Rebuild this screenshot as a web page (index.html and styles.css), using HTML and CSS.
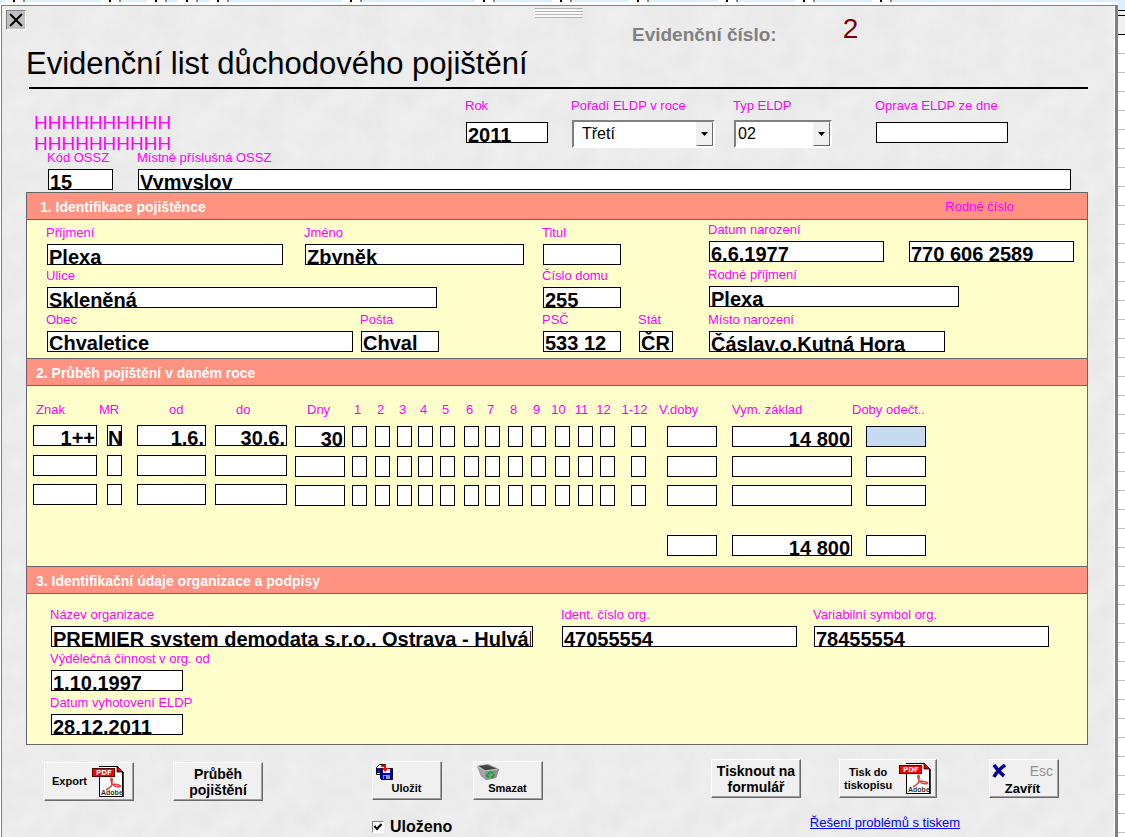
FILE: index.html
```html
<!DOCTYPE html>
<html lang="cs">
<head>
<meta charset="utf-8">
<title>Evidenční list důchodového pojištění</title>
<link rel="stylesheet" href="styles.css">
</head>
<body>
<svg class="defs" width="0" height="0" aria-hidden="true">
  <symbol id="pdf" viewBox="0 0 32 31">
    <path d="M8 1h17l6 6v23H8z" fill="#fff"/>
    <path d="M7.500 11V30.500H30.500V6" fill="none" stroke="#000"/>
    <path d="M7 .5h18" stroke="#000"/>
    <path d="M25 0l6 6h-6z" fill="#e00" stroke="#000" stroke-width=".8"/>
    <path d="M31 6v25" stroke="#000" stroke-width="1.500"/>
    <path d="M19 12c-1 2 1 5 1 7-2 3-4 4-6 5M20 18c3 0 6 0 9 2M19 12c3 1 0 4 1 6 2 2 5 4 9 2" fill="none" stroke="#e04040" stroke-width="1.400"/>
    <rect x=".5" y="2.500" width="22" height="8" fill="#f00" stroke="#500"/>
    <text x="4" y="9" font-family="DejaVu Sans" font-weight="bold" font-size="7" fill="#fff">PDF</text>
    <text x="9" y="29" font-family="Liberation Sans" font-weight="bold" font-size="7" fill="#333">Adobe</text>
  </symbol>
</svg>
<div class="screen">
  <div class="window">
    <div class="strip" aria-hidden="true"><i class="w25"></i><i class="w96"></i><i class="w46"></i><i class="w31"></i><i class="w31"></i><i class="w133"></i><i class="w133"></i><i class="w77"></i><i class="w77"></i><i class="w89"></i><i class="w77"></i><i class="w77"></i></div>
    <form class="dialog">
      <div class="grip" aria-hidden="true"></div>
      <div class="topbar">
        <button type="button" class="close" aria-label="Zavřít okno"><svg width="14" height="14" viewBox="0 0 14 14"><path d="M1 1l12 12M13 1L1 13" stroke="#000" stroke-width="2"/></svg></button>
        <span class="number-label">Evidenční číslo:</span>
        <output class="number">2</output>
      </div>
      <h1>Evidenční list důchodového pojištění</h1>

      <div class="row row-year">
        <div class="holder">HHHHHHHHHH<br>HHHHHHHHHH</div>
        <div class="field"><label for="rok">Rok</label><input id="rok" value="2011"></div>
        <div class="field"><label for="poradi">Pořadí ELDP v roce</label>
          <div class="combo wide"><select id="poradi"><option>Třetí</option></select><span class="arrow"><svg width="7" height="4" viewBox="0 0 7 4"><path d="M0 0h7L3.500 4z"/></svg></span></div></div>
        <div class="field"><label for="typ">Typ ELDP</label>
          <div class="combo"><select id="typ"><option>02</option></select><span class="arrow"><svg width="7" height="4" viewBox="0 0 7 4"><path d="M0 0h7L3.500 4z"/></svg></span></div></div>
        <div class="field"><label for="oprava">Oprava ELDP ze dne</label><input id="oprava"></div>
      </div>
      <div class="row row-office">
        <div class="field"><label for="kod">Kód OSSZ</label><input id="kod" value="15"></div>
        <div class="field"><label for="ossz">Místně příslušná OSSZ</label><input id="ossz" value="Vymyslov"></div>
      </div>

      <div class="panel">
        <div class="band first"><h2>1. Identifikace pojištěnce</h2><label for="rc">Rodné číslo</label></div>
        <div class="person">
          <div class="stack left">
            <div class="row row-name">
              <div class="field"><label for="prijmeni">Příjmení</label><input id="prijmeni" value="Plexa"></div>
              <div class="field"><label for="jmeno">Jméno</label><input id="jmeno" value="Zbyněk"></div>
              <div class="field"><label for="titul">Titul</label><input id="titul"></div>
            </div>
            <div class="row row-street">
              <div class="field"><label for="ulice">Ulice</label><input id="ulice" value="Skleněná"></div>
              <div class="field"><label for="cislo">Číslo domu</label><input id="cislo" value="255"></div>
            </div>
            <div class="row row-town">
              <div class="field"><label for="obec">Obec</label><input id="obec" value="Chvaletice"></div>
              <div class="field"><label for="posta">Pošta</label><input id="posta" value="Chval"></div>
              <div class="field"><label for="psc">PSČ</label><input id="psc" value="533 12"></div>
              <div class="field"><label for="stat">Stát</label><input id="stat" value="ČR"></div>
            </div>
          </div>
          <div class="stack right">
            <div class="row row-birth">
              <div class="field"><label for="narozeni">Datum narození</label><input id="narozeni" value="6.6.1977"></div>
              <div class="field end"><input id="rc" value="770 606 2589"></div>
            </div>
            <div class="row row-maiden"><div class="field"><label for="rodne">Rodné příjmení</label><input id="rodne" value="Plexa"></div></div>
            <div class="row row-place"><div class="field"><label for="misto">Místo narození</label><input id="misto" value="Čáslav,o.Kutná Hora"></div></div>
          </div>
        </div>

        <div class="band"><h2>2. Průběh pojištění v daném roce</h2></div>
        <div class="history">
          <table>
            <colgroup id="cols"></colgroup>
            <thead><tr id="head"></tr></thead>
            <tbody id="rows"></tbody>
            <tfoot><tr id="total"></tr></tfoot>
          </table>
        </div>

        <div class="band"><h2>3. Identifikační údaje organizace a podpisy</h2></div>
        <div class="company">
          <div class="row row-org">
            <div class="field"><label for="org">Název organizace</label><input id="org" value="PREMIER system demodata s.r.o., Ostrava - Hulváky"></div>
            <div class="field"><label for="ico">Ident. číslo org.</label><input id="ico" value="47055554"></div>
            <div class="field"><label for="vs">Variabilní symbol org.</label><input id="vs" value="78455554"></div>
          </div>
          <div class="row row-date"><div class="field"><label for="od">Výdělečná činnost v org. od</label><input id="od" value="1.10.1997"></div></div>
          <div class="row row-date"><div class="field"><label for="vyh">Datum vyhotovení ELDP</label><input id="vyh" value="28.12.2011"></div></div>
        </div>
      </div>

      <div class="footer">
        <div class="group g-left">
          <button type="button" class="btn pic"><span>Export</span><svg width="32" height="31"><use href="#pdf"/></svg></button>
          <button type="button" class="btn big">Průběh<br>pojištění</button>
        </div>
        <div class="group-col g-mid">
          <div class="group">
            <button type="button" class="btn tool">
              <svg width="18" height="16" viewBox="0 0 18 16"><path d="M.5 3.500l3-3h6v10h-9z" fill="#fff" stroke="#000"/><path d="M1 4h3v5H1z" fill="#11c"/><path d="M4.500 4.500h12v11h-11l-1-1z" fill="#00c" stroke="#000"/><path d="M7 5h7v4H7z" fill="#fff"/><path d="M7 11h7v4H7z" fill="#999"/><path d="M8 12h2v3H8z" fill="#00c"/><path d="M5 1h5v3h3l-4 4-3-4h2V3H5z" fill="#f00"/></svg>
              <span>Uložit</span></button>
            <button type="button" class="btn tool">
              <svg width="22" height="16" viewBox="0 0 22 16"><path d="M0 2l11-2 11 5-3 9-10 2-5-4z" fill="#888"/><path d="M2 2l8-1 10 4-11 2z" fill="#444"/><path d="M0 2l8 5 1 9-5-4z" fill="#a4a4a4"/><path d="M8 7l14-2-3 9-10 2z" fill="#8f8f8f"/><path d="M0 2l8 5 13-2" fill="none" stroke="#ccc"/><path d="M11 10l2-2 3 1M17 10l-1 3-2 0M12 13l-2-1 1-2" fill="none" stroke="#0a2" stroke-width="1.600"/></svg>
              <span>Smazat</span></button>
          </div>
          <label class="saved"><input type="checkbox" checked>Uloženo</label>
        </div>
        <div class="group-col g-right">
          <div class="row row-print">
            <button type="button" class="btn big">Tisknout na<br>formulář</button>
            <button type="button" class="btn pic"><span>Tisk do<br>tiskopisu</span><svg width="32" height="31"><use href="#pdf"/></svg></button>
            <button type="button" class="btn exit">
              <svg width="14" height="14" viewBox="0 0 14 14"><path d="M2 1c2 3 6 8 10 11M13 1C9 4 4 8 2 13" fill="none" stroke="#008" stroke-width="3.500"/><path d="M2 1c2 3 6 8 9 10" fill="none" stroke="#00c"/></svg>
              <small>Esc</small><span>Zavřít</span></button>
          </div>
          <a class="help" href="#tisk">Řešení problémů s tiskem</a>
        </div>
      </div>
    </form>
  </div>
  <div class="sheet" aria-hidden="true"></div>
</div>
<script src="script.js"></script>
</body>
</html>
```
FILE: styles.css
```css
* { box-sizing: border-box; }
body { margin: 0; font: 13px/16px "Liberation Sans", Arial, sans-serif; color: #000; background: #fff; }
.defs { position: absolute; }
.screen { display: flex; min-height: 100vh; }
.window { flex: 1; min-width: 0; display: flex; flex-direction: column; padding-left: 1px; }

/* sliver of the grid headers behind the window */
.strip { display: flex; height: 5px; border-bottom: 3px solid #fff; background: #def; margin-left: -1px; }
.strip i { height: 2px; border-right: 2px solid #888; background: linear-gradient(90deg, transparent 8px, #000 8px 10px, transparent 10px) right / 18px 2px no-repeat, linear-gradient(#fff, #fff) right / 18px 2px no-repeat; }
.w25 { width: 25px; } .w31 { width: 31px; } .w46 { width: 46px; } .w77 { width: 77px; }
.w89 { width: 89px; } .w96 { width: 96px; } .w133 { width: 133px; }
.sheet { width: 7px; background:
  linear-gradient(#def 10px, #000 10px 11px, #f0f0f0 11px 15px, #000 15px 16px, #f0f0f0 16px 34px, #000 34px 35px, transparent 35px) 0 0 / 100% 35px no-repeat,
  repeating-linear-gradient(#fff 0 18px, #c0c0c0 18px 19px) 0 35px; }

.dialog { position: relative; flex: 1; border: 0 solid #808080; border-width: 1px 3px 0 1px; box-shadow: inset -1px 0 #fff; background: #ebebeb url("data:image/svg+xml,%3Csvg xmlns='http://www.w3.org/2000/svg' width='103' height='103'%3E%3Cfilter id='n' x='0' y='0' width='100%25' height='100%25' color-interpolation-filters='sRGB'%3E%3CfeTurbulence type='fractalNoise' baseFrequency='.04' numOctaves='4' seed='4' stitchTiles='stitch'/%3E%3CfeColorMatrix values='.04 0 0 0 .904 .04 0 0 0 .904 .04 0 0 0 .904 0 0 0 0 1'/%3E%3C/filter%3E%3Crect width='103' height='103' filter='url(%23n)'/%3E%3C/svg%3E"); }
.grip { position: absolute; top: 2px; left: calc(50% - 24px); width: 48px; height: 10px; background: repeating-linear-gradient(#b4b4b4 0 1px, #f8f8f8 1px 3px); }
.topbar { display: flex; height: 38px; padding: 4px 0 0 4px; }
.close { width: 20px; height: 20px; padding: 2px; border: 1px solid; border-color: #808080 #fff #fff #808080; background: #c0c0c0; line-height: 0; }
.number-label { margin-left: 606px; padding-top: 15px; font-size: 19px; line-height: 20px; font-weight: bold; color: #808080; }
.number { margin-left: 66px; padding-top: 3px; font-size: 28px; line-height: 32px; color: #800000; }
h1 { margin: 0 27px 0 27px; padding: 1px 0 5px; border-bottom: 2px solid #000; font-size: 31px; line-height: 37px; font-weight: normal; text-indent: -3px; white-space: nowrap; }

/* rows of fields: odd tracks hold fields, even tracks are spaces */
.row { display: grid; align-items: start; }
.row > :nth-child(2) { grid-column: 3; }
.row > :nth-child(3) { grid-column: 5; }
.row > :nth-child(4) { grid-column: 7; }
.row > :nth-child(5) { grid-column: 9; }
.field { display: flex; flex-direction: column; gap: 3px; min-width: 0; }
.field.end { align-self: end; }
label { color: #f0f; white-space: nowrap; }
.field label { margin-left: -1px; }
input { display: block; width: 100%; min-width: 0; height: 21px; margin: 0; padding: 5px 1px 0; border: 1px solid #000; border-radius: 0; background: #fff; color: #000; font: bold 20px/23px "Liberation Sans", Arial, sans-serif; outline: 0; }

.row-year { grid-template-columns: 432fr 0px 82fr 24px 143fr 19px 98fr 44px 132fr; padding: 9px 107px 0 32px; }
.row-year .field { gap: 8px; }
.holder { padding-top: 14px; margin-bottom: -4px; font-size: 19px; line-height: 21px; color: #f0f; }
.row-office { grid-template-columns: 65fr 25px 933fr; padding: 0 44px 2px 46px; }
.combo { position: relative; height: 28px; margin: -2px 0 -2px; border: 2px solid; border-color: #808080 #fff #fff #808080; }
.combo select { appearance: none; display: block; width: 100%; height: 24px; padding: 0 20px 0 2px; border: 0; border-radius: 0; background: #fff; color: #000; font: 16px/20px "Liberation Sans", Arial, sans-serif; }
.combo.wide select { padding-left: 8px; }
.arrow { position: absolute; top: 0; right: 0; width: 17px; height: 24px; display: grid; place-items: center; border: 1px solid; border-color: #f0f0f0 #696969 #696969 #f0f0f0; background: #f0f0f0; pointer-events: none; }

.panel { margin: 0 27px 0 24px; border: 1px solid #666; border-top: 0; background: #ffc; }
.band { display: flex; justify-content: space-between; padding: 6px 73px 4px 9px; border: solid #666; border-width: 1px 0; background: #ff9280; }
.band.first { padding-left: 13px; }
h2 { margin: 0; font-size: 14px; line-height: 16px; color: #fff; }
.person { display: grid; grid-template-columns: 626fr 365fr; gap: 36px; padding: 2px 13px 6px 20px; }
.stack { display: grid; }
.left { padding-top: 3px; gap: 3px; }
.right { gap: 5px; }
.row-name { grid-template-columns: 236fr 22px 219fr 19px 78fr 52px; }
.row-street { grid-template-columns: 390fr 106px 78fr 52px; }
.row-town { grid-template-columns: 306fr 8px 78fr 104px 78fr 18px 34fr; }
.row-birth { grid-template-columns: 175fr 25px 165fr; }
.row-maiden { grid-template-columns: 250fr 115fr; }
.row-place { grid-template-columns: 236fr 129fr; }

.history { padding: 16px 161px 10px 6px; }
table { width: 100%; table-layout: fixed; border-collapse: collapse; }
th, td { padding: 0; vertical-align: top; }
th { height: 23px; font-weight: normal; color: #f0f; text-align: left; white-space: nowrap; }
th span { display: block; }
tbody tr { height: 30px; }
tbody tr:nth-child(2) { height: 29px; }
tbody tr:last-child { height: 50px; }
td.low { padding-top: 1px; }
td input { text-align: right; }
td.m input, td.mr input { width: 15px; padding-left: 0; padding-right: 0; text-align: left; }
.m span { display: flex; justify-content: center; width: 15px; margin-left: -2px; }
.m.two span { margin-left: -4px; }
.znak span { padding-left: 3px; }
.mr span { margin-left: -8px; }
.od span { padding-left: 32px; }
.do span { padding-left: 21px; }
.dny span { padding-left: 12px; }
.vdoby span { margin-left: -8px; }
.doby span { margin-left: -14px; }
td.znak { padding-right: 10px; }
td.od { padding-right: 9px; }
td.do { padding-right: 8px; }
td.dny { padding-right: 7px; }
td.vdoby { padding-right: 15px; }
td.zaklad { padding-right: 14px; }
input.active { background: #c6dbef; }

.company { display: grid; gap: 4px; padding: 13px 38px 9px 24px; }
.row-org { grid-template-columns: 482fr 29px 235fr 17px 235fr; }
.row-date { grid-template-columns: 132fr 866fr; }

.footer { display: grid; grid-template-columns: 219px 109fr 171px 168fr 348px; padding: 14px 56px 0 42px; }
.g-left { grid-column: 1; padding-top: 3px; justify-content: space-between; }
.g-mid { grid-column: 3; padding-top: 2px; }
.g-right { grid-column: 5; }
.group { display: flex; align-items: start; justify-content: space-between; }
.group-col { display: flex; flex-direction: column; gap: 17px; }
.row-print { grid-template-columns: 90px 38px 98px 52px 70px; }
.btn { height: 39px; padding: 0; border: 1px solid; border-color: #fff #696969 #696969 #fff; box-shadow: inset -1px -1px #a0a0a0; background: #f0f0f0; color: #000; font: bold 11px/13px "Liberation Sans", Arial, sans-serif; white-space: nowrap; }
.btn.big { width: 90px; font-size: 14px; line-height: 16px; }
.btn.pic { display: flex; align-items: center; justify-content: space-between; min-width: 90px; padding: 0 9px 0 7px; }
.row-print .pic { padding: 0 5px 0 4px; }
.btn.tool { width: 70px; display: grid; grid-template-rows: 18px 18px; padding: 2px 4px 0 3px; }
.btn.exit { display: grid; grid-template-columns: 20px 1fr; align-items: center; grid-template-rows: 20px 16px; padding: 1px 5px 0 2px; font-size: 13px; }
.exit small { font: 14px/16px "Liberation Sans", Arial, sans-serif; color: #909090; text-align: right; }
.exit span { grid-column: 1 / 3; line-height: 14px; }
.saved { display: flex; align-items: center; gap: 6px; font-size: 16px; line-height: 20px; font-weight: bold; color: #000; }
.saved input { appearance: none; width: 12px; height: 12px; padding: 0; border: 1px solid; border-color: #808080 #fff #fff #808080; background: #fff url("data:image/svg+xml,%3Csvg xmlns='http://www.w3.org/2000/svg' viewBox='0 0 10 10'%3E%3Cpath d='M1.500 4l2.500 3 4.500-5' fill='none' stroke='%23000' stroke-width='2'/%3E%3C/svg%3E"); }
.help { align-self: center; color: #00f; }
```
FILE: script.js
```js
const columns = [
  ["Znak", "znak", 74], ["MR", "mr", 30], ["od", "od", 78], ["do", "do", 80], ["Dny", "dny low", 57],
  ["1", "m low", 23], ["2", "m low", 22], ["3", "m low", 21], ["4", "m low", 22], ["5", "m low", 24],
  ["6", "m low", 21], ["7", "m low", 23], ["8", "m low", 23], ["9", "m low", 24],
  ["10", "m two low", 23], ["11", "m two low", 22], ["12", "m two low", 31], ["1-12", "m two low", 36],
  ["V.doby", "vdoby low", 65], ["Vym. základ", "zaklad low", 134], ["Doby odečt..", "doby low", 60]
];
const first = { "Znak": "1++", "MR": "N", "od": "1.6.", "do": "30.6.", "Dny": "30", "Vym. základ": "14 800" };
const cell = ([name, cls], where, value, extra) =>
  `<td class="${cls}"><input aria-label="${name}, ${where}" value="${value || ""}"${extra || ""}></td>`;

document.getElementById("cols").innerHTML = columns.map(c => `<col style="width:${c[2]}px">`).join("");
document.getElementById("head").innerHTML = columns.map(c => `<th scope="col" class="${c[1]}"><span>${c[0]}</span></th>`).join("");
document.getElementById("rows").innerHTML = [1, 2, 3].map(n => "<tr>" + columns.map(c =>
  cell(c, "řádek " + n, n === 1 ? first[c[0]] : "", n === 1 && c[0] === "Doby odečt.." ? ' class="active"' : "")).join("") + "</tr>").join("");
document.getElementById("total").innerHTML = '<td colspan="18"></td>' +
  columns.slice(18).map(c => cell(c, "celkem", c[0] === "Vym. základ" ? "14 800" : "")).join("");
```
